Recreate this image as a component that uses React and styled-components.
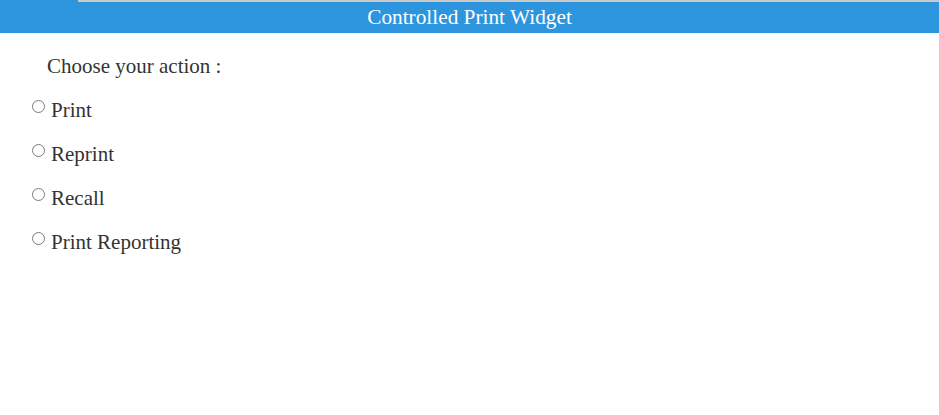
import React from "react";
import styled, { createGlobalStyle } from "styled-components";

const Global = createGlobalStyle`
  html, body { margin: 0; padding: 0; background: #ffffff; }
  body { font-family: "Liberation Serif", "Times New Roman", serif; }
`;

const Page = styled.div`
  width: 939px;
  min-height: 415px;
  background: #ffffff;
`;

const Header = styled.header`
  position: relative;
  height: 33px;
  background: #2d95dd;
  color: #ffffff;
  font-size: 21.3px;
  line-height: 34px;
  text-align: center;
  &::before {
    content: "";
    position: absolute;
    left: 78px;
    right: 0;
    top: 0;
    height: 2px;
    background: #c9c9c9;
  }
`;

const Content = styled.main`
  padding: 22px 0 0 0;
  color: #333333;
  font-size: 21px;
`;

const Heading = styled.div`
  padding-left: 47px;
  line-height: 23px;
  margin-bottom: 21px;
`;

const Options = styled.div`
  display: flex;
  flex-direction: column;
  gap: 21px;
  padding-left: 32px;
`;

const Row = styled.label`
  display: flex;
  align-items: flex-start;
  gap: 6px;
  line-height: 23px;
  cursor: pointer;
`;

const Radio = styled.input.attrs({ type: "radio" })`
  appearance: none;
  -webkit-appearance: none;
  box-sizing: border-box;
  width: 13px;
  height: 13px;
  margin: 1px 0 0 0;
  border: 1px solid #7a7a7a;
  border-radius: 50%;
  background: #ffffff;
  flex: none;
  &:checked {
    background: radial-gradient(circle, #333 0 3px, #fff 3.5px);
  }
`;

const options = ["Print", "Reprint", "Recall", "Print Reporting"];

export default function App() {
  return (
    <Page>
      <Global />
      <Header>Controlled Print Widget</Header>
      <Content>
        <Heading>Choose your action :</Heading>
        <Options>
          {options.map((o) => (
            <Row key={o}>
              <Radio name="action" value={o} />
              <span>{o}</span>
            </Row>
          ))}
        </Options>
      </Content>
    </Page>
  );
}
